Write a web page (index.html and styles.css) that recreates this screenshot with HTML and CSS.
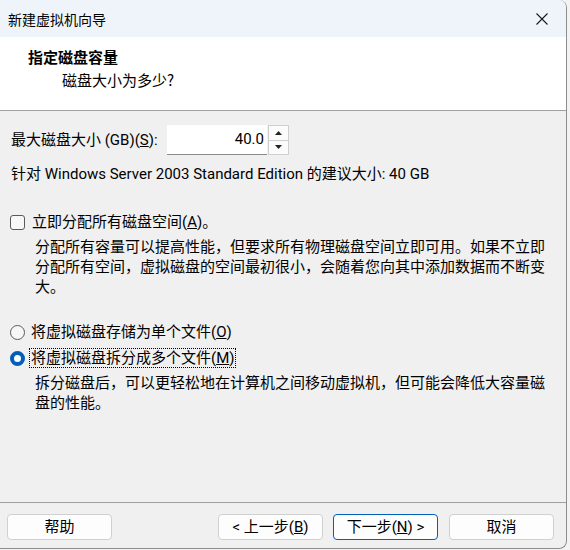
FILE: index.html
```html
<!DOCTYPE html>
<html lang="zh-CN">
<head>
<meta charset="utf-8">
<title>新建虚拟机向导</title>
<link rel="stylesheet" href="styles.css">
</head>
<body>
<div class="window">
  <div class="titlebar">
    <span class="title">新建虚拟机向导</span>
    <svg class="close" width="12" height="12" viewBox="0 0 12 12"><path d="M0.5 0.5 L11.5 11.5 M11.5 0.5 L0.5 11.5" stroke="#1a1a1a" stroke-width="1.1" fill="none"/></svg>
  </div>
  <div class="header">
    <div class="h-title">指定磁盘容量</div>
    <div class="h-sub">磁盘大小为多少?</div>
  </div>
  <div class="content">
    <div class="size-row">
      <span class="label">最大磁盘大小 (GB)(<u>S</u>):</span>
      <div class="spin">
        <div class="spin-input">40.0</div>
        <div class="spin-btns">
          <div class="spin-btn"><svg width="7" height="4" viewBox="0 0 7 4"><path d="M0 4 L3.5 0 L7 4 Z" fill="#222"/></svg></div>
          <div class="spin-btn"><svg width="7" height="4" viewBox="0 0 7 4"><path d="M0 0 L3.5 4 L7 0 Z" fill="#222"/></svg></div>
        </div>
      </div>
    </div>
    <div class="rec">针对 Windows Server 2003 Standard Edition 的建议大小: 40 GB</div>

    <div class="opt check-opt">
      <span class="checkbox"></span>
      <span class="opt-label">立即分配所有磁盘空间(<u>A</u>)。</span>
    </div>
    <p class="desc">分配所有容量可以提高性能，但要求所有物理磁盘空间立即可用。如果不立即分配所有空间，虚拟磁盘的空间最初很小，会随着您向其中添加数据而不断变大。</p>

    <div class="opt radio-opt first">
      <span class="radio"></span>
      <span class="opt-label">将虚拟磁盘存储为单个文件(<u>O</u>)</span>
    </div>
    <div class="opt radio-opt">
      <span class="radio checked"></span>
      <span class="opt-label focus">将虚拟磁盘拆分成多个文件(<u>M</u>)</span>
    </div>
    <p class="desc">拆分磁盘后，可以更轻松地在计算机之间移动虚拟机，但可能会降低大容量磁盘的性能。</p>
  </div>
  <div class="footer">
    <button class="btn">帮助</button>
    <div class="nav">
      <button class="btn">&lt; 上一步(<u>B</u>)</button>
      <button class="btn default">下一步(<u>N</u>) &gt;</button>
      <button class="btn cancel">取消</button>
    </div>
  </div>
</div>
</body>
</html>
```
FILE: styles.css
```css
* { box-sizing: border-box; }
html, body { margin: 0; padding: 0; }
body {
  width: 570px;
  height: 550px;
  background: #f3f3f3;
  font-family: Roboto, "Noto Sans CJK SC", sans-serif;
  font-size: 15px;
  color: #000;
  overflow: hidden;
}
.window {
  width: 567px;
  height: 549px;
  background: #f0f0f0;
  border-right: 1px solid #8c8c8c;
  border-bottom: 1px solid #8c8c8c;
  border-radius: 0 8px 8px 0;
  overflow: hidden;
  display: flex;
  flex-direction: column;
}
.titlebar {
  height: 37px;
  background: #eef4f9;
  display: flex;
  align-items: center;
  justify-content: space-between;
  padding: 0 16px 0 8px;
  flex: none;
}
.title {
  font-family: "Noto Sans CJK SC", sans-serif;
  font-size: 14px;
  line-height: 1;
}
.close { display: block; margin-right: 2px; }
.header {
  height: 74px;
  background: #fff;
  border-bottom: 1px solid #a0a0a0;
  padding: 10px 0 0 28px;
  flex: none;
}
.h-title {
  font-family: "Noto Sans CJK SC", sans-serif;
  font-weight: bold;
  font-size: 15px;
  line-height: 20px;
}
.h-sub {
  font-family: "Noto Sans CJK SC", sans-serif;
  font-size: 15px;
  line-height: 20px;
  margin: 3px 0 0 34px;
}
.content {
  flex: 1;
  padding: 14px 0 0 11px;
}
.size-row {
  display: flex;
  align-items: center;
  height: 30px;
}
.label { width: 156px; line-height: 20px; }
.spin { display: flex; height: 30px; }
.spin-input {
  width: 100px;
  height: 30px;
  background: #fff;
  border-bottom: 1px solid #8a8a8a;
  text-align: right;
  padding: 4px 3px 0 0;
  line-height: 20px;
}
.spin-btns {
  width: 21px;
  display: flex;
  flex-direction: column;
  margin-left: 1px;
  border: 1px solid #cfcfcf;
  background: #fbfbfb;
}
.spin-btn {
  flex: 1;
  display: flex;
  align-items: center;
  justify-content: center;
}
.spin-btn + .spin-btn { border-top: 1px solid #cfcfcf; }
.spin-btn svg { display: block; }
.rec { margin-top: 9px; line-height: 20px; }
.opt {
  display: flex;
  align-items: center;
  height: 20px;
}
.check-opt { margin-top: 28px; margin-left: -1px; }
.checkbox {
  width: 15px;
  height: 15px;
  border: 1px solid #5a5a5a;
  border-radius: 3px;
  background: #f7f7f7;
  margin-right: 6px;
  flex: none;
}
.opt-label { line-height: 18px; padding: 0 1px; }
.desc {
  margin: 5px 0 0 24px;
  width: 515px;
  line-height: 20px;
}
.radio-opt.first { margin-top: 25px; }
.radio-opt + .radio-opt { margin-top: 6px; }
.radio {
  width: 15px;
  height: 15px;
  border: 1px solid #5a5a5a;
  border-radius: 50%;
  background: #f7f7f7;
  margin-right: 5px;
  margin-left: -1px;
  flex: none;
}
.radio.checked {
  border: 4px solid #005fb8;
  background: #fff;
}
.focus { outline: 1px dotted #000; }
.footer {
  flex: none;
  height: 46px;
  border-top: 1px solid #a0a0a0;
  display: flex;
  align-items: center;
  justify-content: space-between;
  padding: 2px 12px 0 7px;
}
.nav { display: flex; gap: 10px; }
.btn {
  width: 105px;
  height: 26px;
  background: #fdfdfd;
  border: 1px solid #d0d0d0;
  border-radius: 4px;
  font-family: Roboto, "Noto Sans CJK SC", sans-serif;
  font-size: 15px;
  line-height: 22px;
  padding: 0;
  color: #000;
}
.btn.default { border-color: #005fb8; }
.btn.cancel { margin-left: 1px; }
```
